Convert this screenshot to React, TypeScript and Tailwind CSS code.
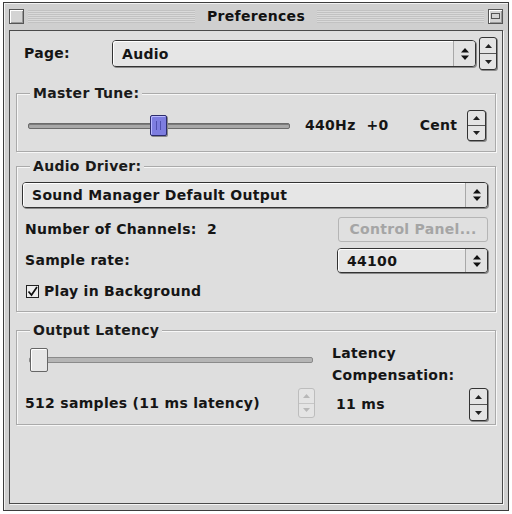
import React from "react";

const font = { fontFamily: '"DejaVu Sans", "Liberation Sans", sans-serif' };

function UpDown({ className = "" }: { className?: string }) {
  return (
    <svg width="8" height="12" viewBox="0 0 8 12" className={className}>
      <path d="M4 0 L8 4.5 L0 4.5 Z" fill="#111" />
      <path d="M4 12 L8 7.5 L0 7.5 Z" fill="#111" />
    </svg>
  );
}

function Popup({ label, className = "" }: { label: string; className?: string }) {
  return (
    <div
      className={`flex items-stretch rounded-[4px] border border-[#333] bg-[#e6e6e6] shadow-[1px_1px_0_#8a8a8a] ${className}`}
    >
      <div className="flex-1 flex items-center pl-[8px] text-[14px] font-bold tracking-[0.3px] text-[#151515] border-t border-l border-white rounded-l-[3px]">
        {label}
      </div>
      <div className="w-[22px] flex items-center justify-center border-l border-[#a8a8a8] bg-[#e2e2e2] rounded-r-[3px]">
        <UpDown />
      </div>
    </div>
  );
}

function Stepper({ disabled = false, className = "" }: { disabled?: boolean; className?: string }) {
  const c = disabled ? "#b8b8b8" : "#222";
  return (
    <div
      className={`flex flex-col rounded-[3px] border bg-[#e4e4e4] ${
        disabled ? "border-[#bdbdbd]" : "border-[#333] shadow-[1px_1px_0_#8a8a8a]"
      } ${className}`}
    >
      <div className={`flex-1 flex items-center justify-center border-b ${disabled ? "border-[#c6c6c6]" : "border-[#555]"}`}>
        <svg width="7" height="4" viewBox="0 0 7 4">
          <path d="M3.5 0 L7 4 L0 4 Z" fill={c} />
        </svg>
      </div>
      <div className="flex-1 flex items-center justify-center">
        <svg width="7" height="4" viewBox="0 0 7 4">
          <path d="M0 0 L7 0 L3.5 4 Z" fill={c} />
        </svg>
      </div>
    </div>
  );
}

function Group({ title, className = "", children }: { title: string; className?: string; children: React.ReactNode }) {
  return (
    <div className={`relative mx-[6px] border border-[#aaaaaa] shadow-[inset_1px_1px_0_#f7f7f7,1px_1px_0_#f7f7f7] ${className}`}>
      <div className="absolute -top-[10px] left-[13px] px-[3px] bg-[#dedede] text-[14px] font-bold tracking-[0.3px] text-[#1a1a1a] leading-[18px]">
        {title}
      </div>
      {children}
    </div>
  );
}

export default function App() {
  return (
    <div className="w-[512px] h-[514px] bg-white pt-[2px] pl-[3px]" style={font}>
      <div className="w-[506px] h-[509px] border border-[#3c3c3c] bg-[#cfcfcf] flex flex-col shadow-[inset_1px_1px_0_#f2f2f2]">
        {/* Title bar */}
        <div className="h-[27px] flex items-center px-[5px] gap-[4px]">
          <div className="w-[15px] h-[15px] border border-[#555] bg-[#d4d4d4] shadow-[inset_1px_1px_0_#fff,inset_-1px_-1px_0_#999]" />
          <div className="flex-1 h-[13px] bg-[repeating-linear-gradient(#c2c2c2_0px,#c2c2c2_1px,#dadada_1px,#dadada_2px)]" />
          <div className="px-[8px] text-[14px] font-bold tracking-[0.3px] text-[#111]">Preferences</div>
          <div className="flex-1 h-[13px] bg-[repeating-linear-gradient(#c2c2c2_0px,#c2c2c2_1px,#dadada_1px,#dadada_2px)]" />
          <div className="w-[15px] h-[15px] border border-[#555] bg-[#d4d4d4] shadow-[inset_1px_1px_0_#fff,inset_-1px_-1px_0_#999] flex items-start justify-center pt-[3px]">
            <div className="w-[9px] h-[6px] border border-[#555]" />
          </div>
        </div>

        {/* Content */}
        <div className="flex-1 mx-[5px] mb-[6px] border border-[#4a4a4a] bg-[#dedede] shadow-[1px_1px_0_#f5f5f5] flex flex-col text-[#151515] tracking-[0.3px]">
          {/* Page row */}
          <div className="flex items-center h-[37px] mt-[4px] pl-[14px] pr-[2px]">
            <div className="w-[88px] text-[14px] font-bold">Page:</div>
            <Popup label="Audio" className="w-[364px] h-[27px]" />
            <Stepper className="ml-[3px] w-[18px] h-[33px]" />
          </div>

          {/* Master Tune */}
          <Group title="Master Tune:" className="mt-[21px] h-[59px]">
            <div className="flex items-center h-full pl-[11px] pr-[9px] pt-[6px]">
              <div className="relative w-[262px] h-[6px] border border-[#6b6b6b] bg-[#a8a8a8] rounded-[2px] shadow-[inset_0_1px_0_#7a7a7a]">
                <div className="absolute left-[121px] -top-[9px] w-[17px] h-[21px] rounded-[2px] border border-[#2c2c6c] bg-[#7d7de0] shadow-[inset_1px_1px_0_#b8b8ff,1px_1px_0_#888]">
                  <div className="mx-auto mt-[5px] w-[5px] h-[9px] border-l border-r border-[#5050b0]" />
                </div>
              </div>
              <div className="ml-[15px] text-[14px] font-bold">440Hz</div>
              <div className="ml-[11px] text-[14px] font-bold">+0</div>
              <div className="ml-[31px] text-[14px] font-bold">Cent</div>
              <Stepper className="ml-auto w-[19px] h-[31px]" />
            </div>
          </Group>

          {/* Audio Driver */}
          <Group title="Audio Driver:" className="mt-[14px] h-[146px]">
            <div className="flex flex-col pl-[5px] pr-[7px] pt-[15px]">
              <Popup label="Sound Manager Default Output" className="w-full h-[26px]" />
              <div className="flex items-center justify-between mt-[9px]">
                <div className="text-[14px] font-bold ml-[3px]">Number of Channels:&nbsp; 2</div>
                <div className="w-[150px] h-[25px] rounded-[3px] border border-[#b5b5b5] bg-[#e0e0e0] flex items-center justify-center text-[14px] font-bold text-[#a5a5a5]">
                  Control Panel...
                </div>
              </div>
              <div className="flex items-center justify-between mt-[6px]">
                <div className="text-[14px] font-bold ml-[3px]">Sample rate:</div>
                <Popup label="44100" className="w-[151px] h-[25px]" />
              </div>
              <div className="flex items-center mt-[8px] ml-[4px] gap-[5px]">
                <div className="w-[13px] h-[13px] border border-[#222] bg-[#eee] flex items-center justify-center">
                  <svg width="11" height="11" viewBox="0 0 11 11">
                    <path d="M1.5 5.5 L4.5 9 L10 1" stroke="#111" strokeWidth="1.7" fill="none" />
                  </svg>
                </div>
                <div className="text-[14px] font-bold">Play in Background</div>
              </div>
            </div>
          </Group>

          {/* Output Latency */}
          <Group title="Output Latency" className="mt-[18px] h-[95px]">
            <div className="flex pl-[12px] pr-[7px] pt-[17px]">
              <div className="flex flex-col w-[284px]">
                <div className="relative h-[24px] flex items-center">
                  <div className="w-full h-[6px] border border-[#8a8a8a] bg-[#b5b5b5] rounded-[2px]" />
                  <div className="absolute left-[1px] top-0 w-[18px] h-[24px] rounded-[2px] border border-[#666] bg-[#e6e6e6] shadow-[inset_1px_1px_0_#fff]" />
                </div>
                <div className="flex items-center mt-[16px] -ml-[4px]">
                  <div className="text-[14px] font-bold">512 samples (11 ms latency)</div>
                  <Stepper disabled className="ml-auto -mr-[2px] w-[17px] h-[30px]" />
                </div>
              </div>
              <div className="flex flex-col ml-[19px] flex-1">
                <div className="text-[14px] font-bold leading-[22px] -mt-[6px]">Latency</div>
                <div className="text-[14px] font-bold leading-[22px]">Compensation:</div>
                <div className="flex items-center mt-[2px]">
                  <div className="text-[14px] font-bold ml-[4px]">11 ms</div>
                  <Stepper className="ml-auto w-[19px] h-[33px]" />
                </div>
              </div>
            </div>
          </Group>
        </div>
      </div>
    </div>
  );
}
